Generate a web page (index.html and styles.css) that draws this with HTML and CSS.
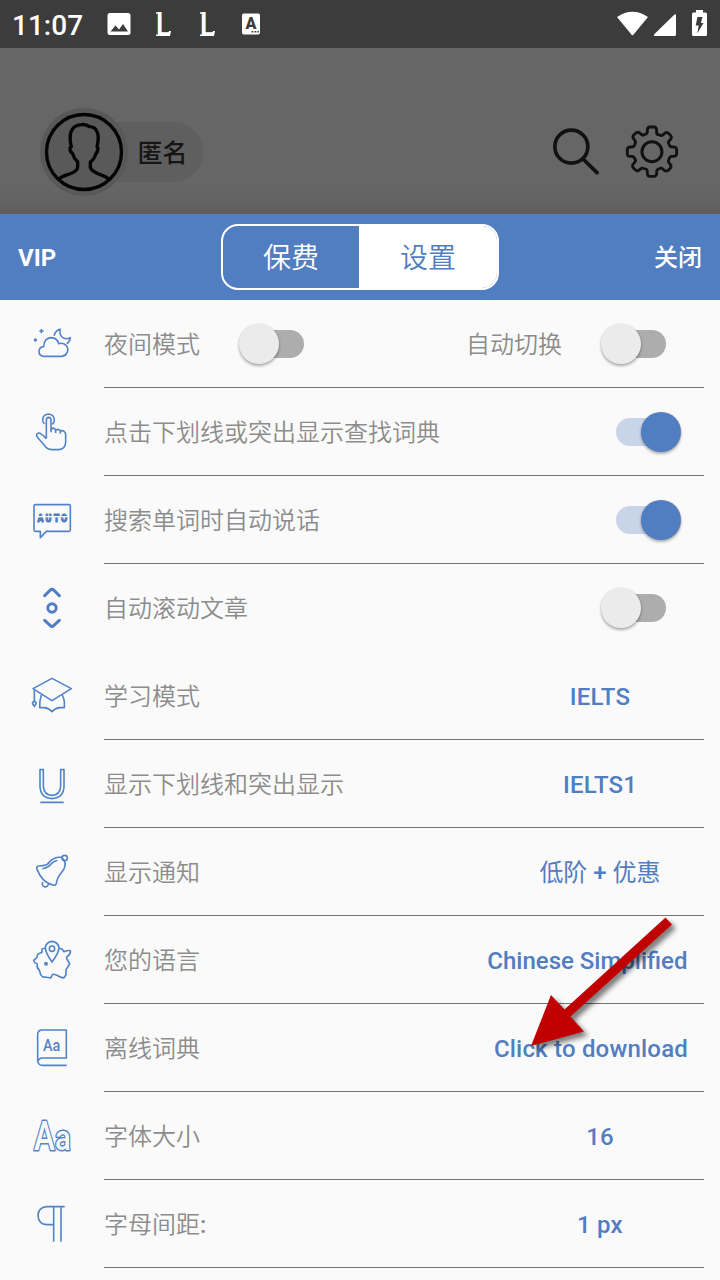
FILE: index.html
```html
<!DOCTYPE html>
<html lang="zh-CN">
<head>
<meta charset="utf-8">
<title>设置</title>
<link rel="stylesheet" href="styles.css">
</head>
<body>
<div class="status">
  <span class="clock">11:07</span>
  <svg class="status-left" viewBox="0 0 160 48">
    <rect x="7.500" y="13" width="23" height="22" rx="2.500" fill="#fff"/>
    <path d="M10.500 31.500l5-6 3.500 4 4-5.500 5 7.500z" fill="#3c3c3c"/>
    <text class="ell" transform="translate(56.300 35.500) scale(1 1.300)">L</text>
    <path d="M56 12.300h4v1.500h-4zM56 34.500h5v1.500h-5zM69 31h2l-1 5h-3z" fill="#fff"/>
    <text class="ell" transform="translate(100.300 35.500) scale(1 1.300)">L</text>
    <path d="M100 12.300h4v1.500h-4zM100 34.500h5v1.500h-5zM113 31h2l-1 5h-3z" fill="#fff"/>
    <rect x="142" y="13.500" width="18" height="21" rx="1.800" fill="#fff"/>
    <text class="badge-a" x="151" y="29" text-anchor="middle">A</text>
    <path d="M151.500 31h1.800v1.600h-1.800zM154.500 31h1.800v1.600h-1.800zM157.400 31h1.600v1.600h-1.600z" fill="#3c3c3c"/>
  </svg>
  <svg class="status-right" viewBox="0 0 100 48">
    <path d="M-3 17Q12.500 6.500 28 17L13.600 34.500Q12.500 36 11.400 34.500Z" fill="#fff"/>
    <path d="M34.500 36Q33 35.500 34.500 34L54.500 14.500Q56 13.500 56 15.500V34.500Q56 36 54.500 36Z" fill="#fff"/>
    <path d="M73.500 12.500h2.500V10h7v2.500h2.500a1.500 1.500 0 0 1 1.500 1.500v20.500a1.500 1.500 0 0 1-1.500 1.500h-12a1.500 1.500 0 0 1-1.500-1.500V14a1.500 1.500 0 0 1 1.500-1.500z" fill="#fff"/>
    <path d="M77.500 17h5l-1.600 6h2.600l-6.200 10.500 1.400-8h-3z" fill="#3c3c3c"/>
  </svg>
</div>

<div class="profile">
  <div class="user">
    <svg class="avatar" viewBox="120 324 264 264">
      <circle cx="252" cy="456" r="132" fill="#595959"/>
      <g fill="none" stroke="#040404" stroke-width="10" stroke-linejoin="round">
        <circle cx="252" cy="456" r="112.500"/>
        <path d="M177 537Q184 530 203 524Q232 515 233 502L233 486Q222 476 217 459Q210 457 210 444L214 440Q208 417 212 398Q218 376 244 374Q258 372 268 380Q286 380 293 399Q297 417 291 440L294 444Q293 457 288 460Q283 478 271 486L271 502Q273 513 299 523Q319 530 328 537"/>
      </g>
    </svg>
    <span class="name">匿名</span>
  </div>
  <svg class="tools" viewBox="150 370 400 172" fill="none" stroke="#111" stroke-width="11" stroke-linecap="round" stroke-linejoin="round">
    <circle cx="214" cy="441" r="49.500"/>
    <path d="M250 479L291 519"/>
    <circle cx="456" cy="456" r="30" stroke-width="9"/>
    <path stroke-width="8.500" d="M442 393Q442 382 450 382H462Q470 382 470 393V400Q470 404 475 405L485 408Q489 407 493 402Q500 395 508 403Q518 412 512 419Q506 425 505 428L509 438Q511 442 516 442Q530 440 530 450V462Q530 470 519 470H514Q510 471 508 476L505 485Q506 489 510 493Q517 500 509 508Q500 518 493 512Q487 506 483 505L474 509Q470 511 470 516Q472 530 462 530H450Q442 530 442 519V514Q441 509 436 508L427 505Q423 507 419 510Q412 517 404 509Q394 500 400 493Q406 487 407 483L403 474Q401 470 396 470Q382 472 382 462V450Q382 442 393 442H398Q402 441 404 436L407 427Q406 423 402 419Q395 412 403 404Q412 394 419 400Q425 406 429 407L438 403Q442 401 442 396Z"/>
  </svg>
</div>

<div class="sheet">
  <div class="bar">
    <span class="vip">VIP</span>
    <div class="tabs"><span class="tab">保费</span><span class="tab active">设置</span></div>
    <span class="close">关闭</span>
  </div>

  <div class="row">
    <svg class="icon" viewBox="0 12 210 150">
      <path d="M71 124Q57 123 57 109Q58 96 71 95Q72 69 93 68Q112 69 116 86Q129 82 138 91Q147 101 141 113Q137 123 126 124Z"/>
      <path d="M102 62Q108 44 121 43Q117 57 126 66Q136 75 151 68Q150 80 140 86M64 42V55M58 48H71"/>
      <circle class="dot" cx="46" cy="75" r="5"/>
    </svg>
    <div class="body line">
      <span class="label">夜间模式</span><i class="switch"></i>
      <span class="label push">自动切换</span><i class="switch end"></i>
    </div>
  </div>
  <div class="row">
    <svg class="icon" viewBox="0 276 210 150">
      <path d="M74 327Q67 321 68 313Q70 298 86 297Q102 299 103 314Q103 323 97 328"/>
      <path d="M79 371V314Q80 307 86 307Q93 308 93 314V352M93 346Q94 339 101 339Q107 341 107 349V354M107 347Q113 339 121 347V356M121 350Q126 344 133 350Q137 353 137 360V382Q136 403 116 404H95Q84 403 78 397L51 365Q47 356 56 354Q63 354 79 371"/>
    </svg>
    <div class="body line"><span class="label">点击下划线或突出显示查找词典</span><i class="switch end on"></i></div>
  </div>
  <div class="row">
    <svg class="icon" viewBox="0 15 210 150">
      <path d="M46 44H147Q151 44 151 48V120Q151 124 147 124H79L61 143V124H46Q42 124 42 120V48Q42 44 46 44Z"/>
      <text class="auto" transform="scale(.8 1)" x="77 107 137 165" y="96">AUTO</text>
      <path class="cut" d="M50 80H142"/>
    </svg>
    <div class="body line"><span class="label">搜索单词时自动说话</span><i class="switch end on"></i></div>
  </div>
  <div class="row">
    <svg class="icon bold" viewBox="0 279 210 150">
      <path d="M74 317L91 300Q96 296 101 300L118 317M74 391L91 407Q96 412 101 407L118 391"/>
      <circle cx="96" cy="354" r="12.500"/>
    </svg>
    <div class="body"><span class="label">自动滚动文章</span><i class="switch end"></i></div>
  </div>
  <div class="row">
    <svg class="icon" viewBox="0 18 210 150">
      <path d="M96 40L154 71L96 107L39 71ZM64 90Q58 108 59 128H73Q88 130 96 140Q104 130 119 128H133Q135 106 127 90M43 74V108"/>
      <path d="M43 108Q36 113 38 117L43 124L48 117Q50 112 43 108Z"/>
    </svg>
    <div class="body line"><span class="label">学习模式</span><span class="value">IELTS</span></div>
  </div>
  <div class="row">
    <svg class="icon" viewBox="0 282 210 150">
      <path d="M60 314H70V364Q72 390 96 391Q120 390 122 364V314H132V364Q131 399 96 401Q61 399 60 364ZM61 412H131"/>
    </svg>
    <div class="body line"><span class="label">显示下划线和突出显示</span><span class="value">IELTS1</span></div>
  </div>
  <div class="row">
    <svg class="icon" viewBox="0 21 210 150">
      <path d="M50 85Q50 78 57 78L73 76Q83 75 88 66Q104 49 124 52L132 60Q142 78 124 98Q112 111 109 130Q107 138 99 135Q66 129 50 85ZM67 86Q85 83 94 71Q101 64 112 61"/>
      <circle cx="134" cy="54" r="8"/><path d="M69 126A9 9 0 1 0 85 132"/>
    </svg>
    <div class="body line"><span class="label">显示通知</span><span class="value cjk">低阶 <b>+</b> 优惠</span></div>
  </div>
  <div class="row">
    <svg class="icon" viewBox="0 285 210 150">
      <path d="M96 366Q76 337 76 323Q78 306 96 304Q114 306 117 323Q117 337 96 366Z"/>
      <circle cx="96" cy="326" r="8"/><circle class="dot" cx="78" cy="371" r="6"/>
      <path d="M75 325L66 327V337L53 343L50 353L41 361L45 369Q53 369 52 375Q49 384 58 390L62 404Q67 413 74 411L92 414L98 403Q105 402 115 408Q125 413 131 414L138 404V389L149 372L141 357Q137 350 144 348Q153 341 151 332Q144 330 132 335L126 327L117 325"/>
    </svg>
    <div class="body line"><span class="label">您的语言</span><span class="value language">Chinese Simplified</span></div>
  </div>
  <div class="row">
    <svg class="icon" viewBox="0 24 210 150">
      <path d="M140 45H67Q53 45 53 59V138Q55 151 67 151H140M53 139Q57 129 67 129H139V45"/>
      <text class="book" transform="translate(69 108) scale(.83 1)">Aa</text>
    </svg>
    <div class="body line"><span class="label">离线词典</span><span class="value">Click to download</span></div>
  </div>
  <div class="row">
    <svg class="icon" viewBox="0 288 210 150">
      <text class="outline" transform="translate(42 406) scale(.76 1)">A</text>
      <text class="outline small" transform="translate(105 406) scale(.84 1)">a</text>
    </svg>
    <div class="body line"><span class="label">字体大小</span><span class="value">16</span></div>
  </div>
  <div class="row">
    <svg class="icon" viewBox="0 57 210 150">
      <path d="M134 80H80Q54 83 54 107Q56 133 80 134H101M101 80V185M123 80V185"/>
    </svg>
    <div class="body line"><span class="label">字母间距<span class="colon">:</span></span><span class="value">1 px</span></div>
  </div>
</div>

<svg class="arrow" viewBox="0 0 250 180">
  <path d="M195.500 17.500L202 24.500L100.500 116.500L114 131.500L61 146L81 95L94.500 109.500Z"/>
</svg>
</body>
</html>
```
FILE: styles.css
```css
* { box-sizing: border-box; }
body {
  position: relative;
  width: 720px;
  height: 1280px;
  margin: 0;
  overflow: hidden;
  background: #fafafa;
  font-family: Roboto, "Noto Sans CJK SC", sans-serif;
}
svg { display: block; overflow: visible; }

.status {
  display: flex;
  height: 48px;
  background: #3c3c3c;
  color: #fff;
}
.clock {
  width: 100px;
  padding-left: 12px;
  font-size: 28px;
  font-weight: 500;
  line-height: 52px;
}
.status-left { width: 160px; height: 48px; }
.status-right { width: 100px; height: 48px; margin-left: auto; }
.ell { font: 700 25px Roboto, sans-serif; fill: #fff; }
.badge-a { font: 900 16px Roboto, sans-serif; fill: #3c3c3c; }

.profile {
  display: flex;
  justify-content: space-between;
  height: 166px;
  padding: 60px 36.700px 0 40px;
  background: linear-gradient(#666 0, #666 82%, #636363 94%, #5d5d5d 100%);
}
.user {
  display: flex;
  align-items: center;
  width: 163px;
  height: 88px;
}
.user::before {
  content: "";
  width: 119px;
  height: 60px;
  margin: 0 -163px 0 44px;
  border-radius: 0 30px 30px 0;
  background: #5f5f5f;
}
.avatar { position: relative; width: 88px; height: 88px; flex: none; }
.name {
  position: relative;
  margin-left: 9.500px;
  padding-bottom: 3px;
  flex: none;
  color: #151515;
  font-size: 25px;
  font-weight: 500;
}
.tools { width: 133.300px; height: 57.300px; margin-top: 15.300px; }

.bar {
  display: grid;
  grid-template-columns: 1fr 278px 1fr;
  align-items: center;
  height: 86px;
  padding: 0 18px;
  background: #517dc1;
  color: #fff;
}
.vip, .close { font-size: 24px; font-weight: 700; }
.vip { padding-top: 2px; }
.close { padding-bottom: 4px; font-weight: 500; text-align: right; }
.tabs {
  display: grid;
  grid-template-columns: 136px 138px;
  height: 66px;
  border: 2px solid #fff;
  border-radius: 17px;
  overflow: hidden;
}
.tab { font-size: 28px; line-height: 66px; text-align: center; font-weight: 350; height: 62px; }
.active { background: #fff; color: #517dc1; }

.row { display: flex; align-items: center; height: 88px; padding: 0 16px 0 20px; }
.icon {
  width: 70px;
  height: 50px;
  margin-right: 14px;
  flex: none;
  fill: none;
  stroke: #5283c9;
  stroke-width: 4.800;
  stroke-linejoin: round;
}
.bold { stroke: #517dc1; stroke-width: 9; stroke-linecap: round; }
.dot { fill: #5283c9; stroke: none; }
.auto {
  font: 900 33px Roboto, sans-serif;
  text-anchor: middle;
  fill: #517dc1;
  stroke: #517dc1;
  stroke-width: 3.500;
}
.icon .cut { stroke: #fafafa; stroke-width: 4; }
.book { font: 500 52px Roboto, sans-serif; fill: #5283c9; stroke: none; }
.outline {
  font: 500 124px Roboto, sans-serif;
  fill: #fafafa;
  stroke-width: 9;
  paint-order: stroke;
}
.small { font-size: 104px; }
.body { display: flex; align-items: center; width: 600px; height: 88px; }
.line { border-bottom: 1px solid #737373; padding-top: 1px; }
.label {
  padding-bottom: 4px;
  color: #8c8c8c;
  font-size: 24px;
  font-weight: 350;
  white-space: nowrap;
}
.colon { font-weight: 500; }
.push { margin-left: auto; }
.value {
  min-width: 176px;
  margin: 0 16px 0 auto;
  padding-top: 2px;
  color: #517dc1;
  font-size: 24px;
  font-weight: 500;
  letter-spacing: .2px;
  text-align: center;
  white-space: nowrap;
}
.language { margin-right: 16.500px; letter-spacing: 0; }
.cjk { padding: 0 0 4px; font-weight: 400; letter-spacing: 0; }
.cjk b { font-weight: 500; }

.switch {
  position: relative;
  width: 50px;
  height: 28px;
  margin-left: 54px;
  border-radius: 14px;
  background: #adadad;
}
.switch::after {
  content: "";
  position: absolute;
  top: -6px;
  left: -15px;
  width: 40px;
  height: 40px;
  border-radius: 50%;
  background: #ebebeb;
  box-shadow: 0 2px 3px rgba(0, 0, 0, .3), 0 0 2px rgba(0, 0, 0, .12);
}
.end { margin-right: 38px; }
.label:not(.push) + .end { margin-left: auto; }
.on { background: #c8d5e9; }
.on::after { left: 25px; background: #517dc1; }

.arrow {
  position: absolute;
  left: 470px;
  top: 900px;
  width: 250px;
  height: 180px;
  fill: #c00000;
  filter: drop-shadow(4px 4px 2.500px rgba(0, 0, 0, .5));
}
```
